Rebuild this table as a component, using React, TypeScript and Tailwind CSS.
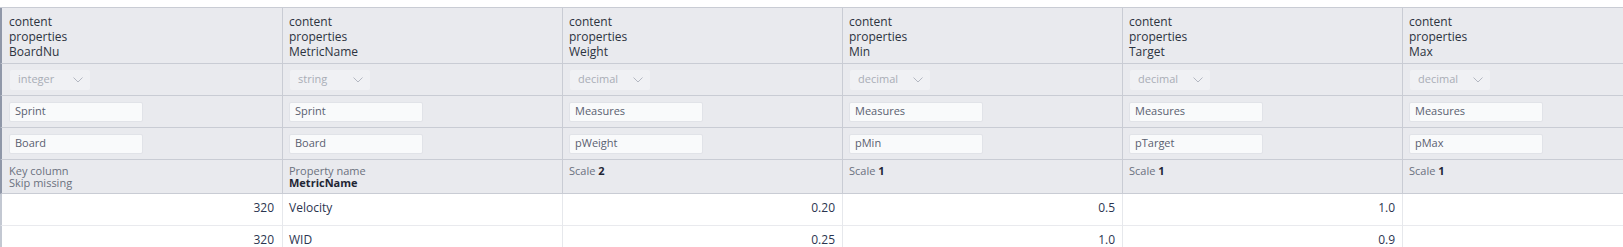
const columns = [
  { name: "BoardNu", type: "integer", src: "Sprint", field: "Board", kind: "key" },
  { name: "MetricName", type: "string", src: "Sprint", field: "Board", kind: "prop" },
  { name: "Weight", type: "decimal", src: "Measures", field: "pWeight", kind: "scale", scale: 2 },
  { name: "Min", type: "decimal", src: "Measures", field: "pMin", kind: "scale", scale: 1 },
  { name: "Target", type: "decimal", src: "Measures", field: "pTarget", kind: "scale", scale: 1 },
  { name: "Max", type: "decimal", src: "Measures", field: "pMax", kind: "scale", scale: 1 },
];

const rows = [
  ["320", "Velocity", "0.20", "0.5", "1.0", ""],
  ["320", "WID", "0.25", "1.0", "0.9", ""],
];

function Chevron() {
  return (
    <svg width="10" height="6" viewBox="0 0 10 6" className="ml-auto mr-[7px]">
      <path d="M0.5 0.5 L5 5 L9.5 0.5" fill="none" stroke="#b4b8c2" strokeWidth="1" />
    </svg>
  );
}

function HeadCell({ i, className, children }: { i: number; className: string; children?: React.ReactNode }) {
  const edge = i === 0 ? "border-l-2 border-l-[#8f97a8] pl-[7px]" : "border-l border-l-[#c9ccd4] pl-[6px]";
  return <div className={`${edge} border-b border-b-[#c9ccd4] bg-[#e9eaee] ${className}`}>{children}</div>;
}

export default function App() {
  return (
    <div className="w-[1623px] h-[247px] overflow-hidden bg-white pt-[7px] font-['Open_Sans',sans-serif] text-[#2c3340]">
      <div className="grid grid-cols-[282px_280px_280px_280px_280px_1fr] border-t border-t-[#c9ccd4]">
        {/* title row */}
        {columns.map((c, i) => (
          <HeadCell key={"t" + i} i={i} className="h-[56px] pt-[6px] text-[12px] leading-[15px]">
            <div>content</div>
            <div>properties</div>
            <div>{c.name}</div>
          </HeadCell>
        ))}

        {/* type row */}
        {columns.map((c, i) => (
          <HeadCell key={"y" + i} i={i} className="h-[32px] flex items-center">
            <div className="ml-px flex h-[20px] w-[80px] items-center rounded-[2px] bg-[#f0f1f4] pl-[8px] text-[11px] text-[#a9adb6]">
              {c.type}
              <Chevron />
            </div>
          </HeadCell>
        ))}

        {/* source row */}
        {columns.map((c, i) => (
          <HeadCell key={"s" + i} i={i} className="h-[32px] flex items-center">
            <div className="flex h-[20px] w-[134px] items-center rounded-[2px] border border-[#e1e3e8] bg-[#f9fafb] pl-[5px] text-[11px] text-[#5a6070]">
              {c.src}
            </div>
          </HeadCell>
        ))}

        {/* field row */}
        {columns.map((c, i) => (
          <HeadCell key={"f" + i} i={i} className="h-[32px] flex items-center">
            <div className="flex h-[20px] w-[134px] items-center rounded-[2px] border border-[#e1e3e8] bg-[#f9fafb] pl-[5px] text-[11px] text-[#5a6070]">
              {c.field}
            </div>
          </HeadCell>
        ))}

        {/* info row */}
        {columns.map((c, i) => (
          <HeadCell key={"i" + i} i={i} className="h-[34px] pt-[5px] text-[11px] leading-[12px] text-[#6b717e]">
            {c.kind === "key" && (
              <>
                <div>Key column</div>
                <div>Skip missing</div>
              </>
            )}
            {c.kind === "prop" && (
              <>
                <div>Property name</div>
                <div className="font-bold text-[#1f2635]">{c.name}</div>
              </>
            )}
            {c.kind === "scale" && (
              <div>
                Scale <span className="font-bold text-[#1f2635]">{c.scale}</span>
              </div>
            )}
          </HeadCell>
        ))}

        {/* data */}
        {rows.map((r, ri) =>
          r.map((v, ci) => (
            <div
              key={ri + "-" + ci}
              className={`h-[32px] flex items-start pt-[6px] leading-[16px] border-b border-b-[#e9eaee] text-[12px] text-[#2b3550] ${
                ci === 0 ? "border-l-2 border-l-[#c3c8d2] justify-end pr-[8px]" : "border-l border-l-[#e6e8ec]"
              } ${ci === 1 ? "pl-[6px]" : ci > 1 ? "justify-end pr-[7px]" : ""}`}
            >
              {v}
            </div>
          ))
        )}
      </div>
    </div>
  );
}
